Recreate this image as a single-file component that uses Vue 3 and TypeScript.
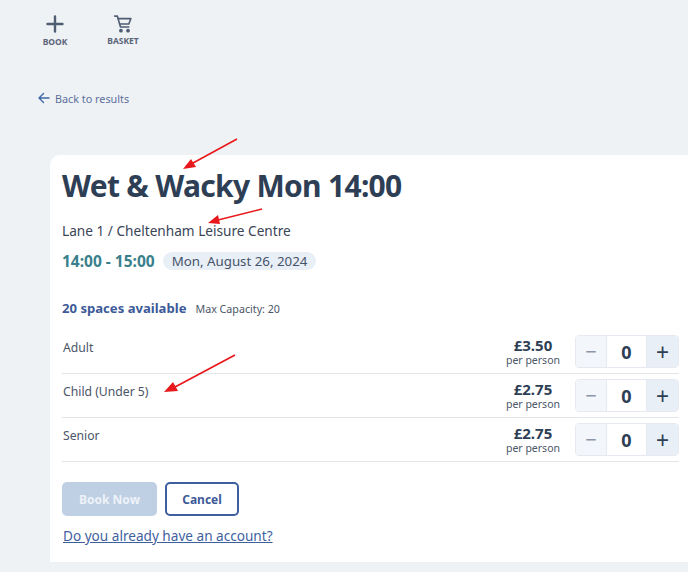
<script setup lang="ts">
interface Row { name: string; price: string }
const rows: Row[] = [
  { name: 'Adult', price: '£3.50' },
  { name: 'Child (Under 5)', price: '£2.75' },
  { name: 'Senior', price: '£2.75' },
]
</script>

<template>
  <div class="page">
    <nav class="nav">
      <div class="nav-item book">
        <svg width="24" height="24" viewBox="0 0 24 24" fill="none" stroke="#4f5d73" stroke-width="2.4" stroke-linecap="round">
          <path d="M12 4.5v15M4.5 12h15" />
        </svg>
        <span>BOOK</span>
      </div>
      <div class="nav-item basket">
        <svg width="20" height="20" viewBox="0 0 24 24" fill="none" stroke="#4f5d73" stroke-width="1.9" stroke-linecap="round" stroke-linejoin="round">
          <path d="M2 2.5h3.2L9 15.5h10" />
          <path d="M6 5.5h15.5L19 12H8" />
          <circle cx="9.5" cy="20" r="1.3" fill="#4f5d73" />
          <circle cx="18" cy="20" r="1.3" fill="#4f5d73" />
        </svg>
        <span>BASKET</span>
      </div>
    </nav>

    <a class="back">
      <svg width="12" height="12" viewBox="0 0 12 12" fill="none" stroke="#3f67a8" stroke-width="1.4" stroke-linecap="round" stroke-linejoin="round">
        <path d="M11 6H1.5M5.5 1.5 1 6l4.5 4.5" />
      </svg>
      <span>Back to results</span>
    </a>

    <main class="card">
      <h1 class="title">Wet &amp; Wacky Mon 14:00</h1>
      <p class="location">Lane 1 / Cheltenham Leisure Centre</p>
      <div class="when">
        <span class="time">14:00 - 15:00</span>
        <span class="date">Mon, August 26, 2024</span>
      </div>
      <div class="spaces">
        <strong>20 spaces available</strong>
        <span>Max Capacity: 20</span>
      </div>

      <div class="rows">
        <div v-for="row in rows" :key="row.name" class="row">
          <div class="name">{{ row.name }}</div>
          <div class="price">
            <b>{{ row.price }}</b>
            <small>per person</small>
          </div>
          <div class="stepper">
            <span class="step minus">−</span>
            <span class="qty">0</span>
            <span class="step plus">+</span>
          </div>
        </div>
      </div>

      <div class="actions">
        <button class="primary" type="button">Book Now</button>
        <button class="secondary" type="button">Cancel</button>
      </div>
      <a class="account">Do you already have an account?</a>
    </main>

    <svg class="arrows" width="688" height="572" viewBox="0 0 688 572" fill="#e8191c" stroke="#e8191c">
      <path d="M237 139 193 163" stroke-width="1.6" />
      <path d="M183 169 196 167 191 159z" stroke="none" />
      <path d="M262 209 218 220" stroke-width="1.6" />
      <path d="M208 223 220 224 218 215z" stroke="none" />
      <path d="M235 355 175 387" stroke-width="1.6" />
      <path d="M164 392 178 391 173 382z" stroke="none" />
    </svg>
  </div>
</template>

<style>
html, body { margin: 0; background: #eff2f5; }
</style>

<style scoped>
.page {
  position: relative;
  width: 688px;
  height: 572px;
  overflow: hidden;
  background: #eff2f5;
  font-family: "Noto Sans", sans-serif;
  color: #2d3e55;
}
.nav {
  display: flex;
  height: 90px;
  padding-left: 35px;
  box-sizing: border-box;
}
.nav-item {
  display: flex;
  flex-direction: column;
  align-items: center;
  font-size: 8.5px;
  font-weight: 700;
  color: #5a6679;
}
.book { width: 40px; padding-top: 12px; }
.book span { margin-top: 0; }
.basket { width: 56px; margin-left: 20px; padding-top: 14px; }
.basket span { margin-top: 1px; }
.back {
  display: flex;
  align-items: center;
  gap: 5px;
  height: 16px;
  margin-left: 38px;
  font-size: 10.8px;
  color: #5b6f9c;
}
.card {
  margin: 49px 0 0 50px;
  height: 407px;
  box-sizing: border-box;
  padding: 12px 9px 0 12px;
  background: #fff;
  border-radius: 10px 0 0 0;
}
.title {
  margin: 0;
  font-size: 30px;
  line-height: 38px;
  font-weight: 700;
  letter-spacing: -0.7px;
  color: #2d3e55;
}
.location {
  margin: 16px 0 0;
  font-size: 13.65px;
  line-height: 20px;
  color: #3a4556;
}
.when {
  display: flex;
  align-items: center;
  gap: 8px;
  margin-top: 10px;
  height: 20px;
}
.time {
  font-size: 15.5px;
  font-weight: 700;
  color: #3a7f8c;
}
.date {
  padding: 0 9px;
  font-size: 13.3px;
  line-height: 18px;
  border-radius: 9px;
  background: #e9eff7;
  color: #46536a;
}
.spaces {
  display: flex;
  align-items: baseline;
  gap: 9px;
  margin-top: 28px;
  height: 20px;
}
.spaces strong {
  font-size: 13.1px;
  color: #3d5a99;
}
.spaces span {
  font-size: 10.7px;
  color: #4b5568;
}
.rows { margin-top: 11px; }
.row {
  display: flex;
  height: 44px;
  padding-top: 5px;
  box-sizing: border-box;
  align-items: flex-start;
  border-bottom: 1.5px solid #e2e5ea;
}
.name {
  flex: 1;
  padding-top: 3px;
  padding-left: 1px;
  font-size: 12.2px;
  line-height: 20px;
  color: #4b5568;
}
.price {
  display: flex;
  flex-direction: column;
  align-items: center;
  padding-top: 2px;
}
.price b {
  font-size: 15px;
  line-height: 16px;
  color: #2d3e55;
}
.price small {
  font-size: 10.5px;
  line-height: 14px;
  color: #4b5568;
}
.stepper {
  display: flex;
  height: 33px;
  width: 104px;
  margin: 0 0 0 15px;
  box-sizing: border-box;
  border: 1px solid #e6eaf0;
  border-radius: 4px;
  overflow: hidden;
}
.step {
  display: flex;
  align-items: center;
  justify-content: center;
  font-size: 20px;
}
.minus { width: 30px; background: #f3f6fa; color: #8b97a8; }
.plus { flex: 1; background: #e9eff7; color: #2d3e55; font-size: 23px; }
.qty {
  width: 41px;
  display: flex;
  align-items: center;
  justify-content: center;
  background: #fff;
  font-size: 18px;
  font-weight: 700;
  color: #2d3e55;
  border-left: 1px solid #e6eaf0;
  border-right: 1px solid #e6eaf0;
  box-sizing: border-box;
}
.actions {
  display: flex;
  gap: 8px;
  margin-top: 20px;
}
.actions button {
  height: 34px;
  box-sizing: border-box;
  border-radius: 5px;
  font-family: inherit;
  font-size: 12px;
  font-weight: 700;
  padding: 0;
}
.primary {
  width: 95px;
  border: 0;
  background: #bfcfe4;
  color: #eef3f9;
}
.secondary {
  width: 74px;
  border: 2px solid #3d5f9f;
  background: #fff;
  color: #3d5a99;
}
.account {
  display: block;
  margin-top: 10px;
  padding-left: 1px;
  font-size: 13.6px;
  line-height: 20px;
  color: #3f5f9f;
  text-decoration: underline;
}
.arrows {
  position: absolute;
  inset: 0;
  pointer-events: none;
}
</style>
